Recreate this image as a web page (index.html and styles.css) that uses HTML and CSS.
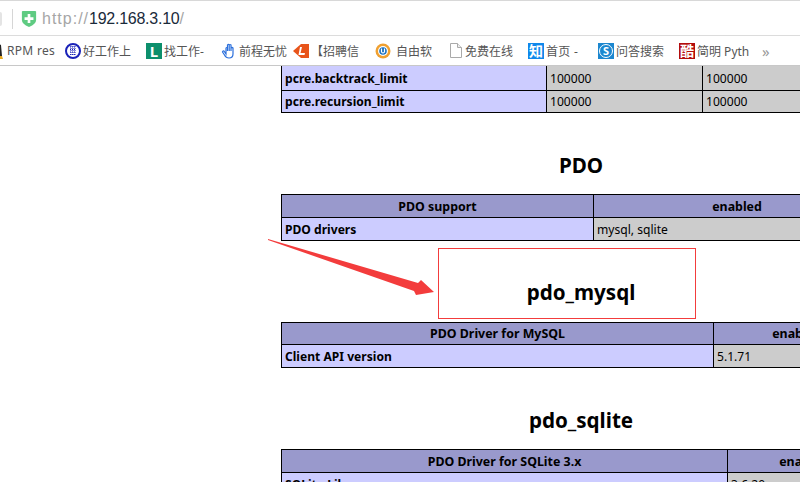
FILE: index.html
```html
<!doctype html>
<html lang="en">
<head>
    <meta charset="UTF-8">
    <title>phpinfo()</title>
    <link rel="stylesheet" href="styles.css">
</head>
<body>
<div class="browser-toolbar">
    <span class="reload-edge"></span>
    <span class="toolbar-sep"></span>
    <svg class="shield" width="16" height="18" viewBox="0 0 18 20">
        <path d="M1 1.500 Q1 1 2 1 H16 Q17 1 17 1.500 V11 Q17 15.500 9 19 Q1 15.500 1 11 Z" fill="#5fcb82"/>
        <path d="M7.500 4.500 H10.500 V8 H14 V11 H10.500 V14.500 H7.500 V11 H4 V8 H7.500 Z" fill="#fff"/>
    </svg>
    <span class="url"><span class="url-dim url-scheme">http://</span>192.168.3.10<span class="url-dim">/</span></span>
</div>

<div class="bookmarks">
    <div class="bookmark bookmark-first">
        <svg class="bm-icon" width="16" height="16" viewBox="0 0 16 16">
            <path d="M4 2 Q8 0 12 2 L13 13 Q8 16 3 13 Z" fill="#222"/>
            <path d="M6 8 Q8 6 10 8 L11 13 H5 Z" fill="#eee"/>
            <path d="M3 13 L7 13 L6 16 H2 Z M9 13 L13 13 L14 16 H10 Z" fill="#e8a820"/>
        </svg>
        <span class="bm-latin">RPM res</span>
    </div>
    <div class="bookmark">
        <svg class="bm-icon" width="16" height="16" viewBox="0 0 16 16">
            <circle cx="8" cy="8" r="7" fill="#fff" stroke="#1a22b8" stroke-width="2"/>
            <path d="M5 4 H11 M5 6.500 H11 M5 9 H11 M5 11.500 H11 M6 3 V13 M8 3 V13 M10 3 V13" stroke="#1a22b8" stroke-width="1" stroke-dasharray="1 1"/>
        </svg>
        <span>好工作上</span>
    </div>
    <div class="bookmark">
        <span class="bm-icon tile tile-green">L</span>
        <span>找工作-</span>
    </div>
    <div class="bookmark">
        <svg class="bm-icon" width="16" height="16" viewBox="0 0 16 16">
            <path d="M3 8 L5 11 V5 Q5.800 4 6.500 5 V2 Q7.300 .800 8.200 2 V2 Q9 1 10 2 V5 Q11 4 12 5 V11 Q12 15 8 15 Q5 15 3.500 12 L1.500 9 Q2 7.500 3 8 Z M6.500 5 V8 M8.200 2 V8 M10 5 V8" fill="#fff" stroke="#2a6fdc" stroke-width="1.200"/>
        </svg>
        <span>前程无忧</span>
    </div>
    <div class="bookmark">
        <svg class="bm-icon" width="16" height="16" viewBox="0 0 16 16">
            <path d="M0 8 L8 1 H16 V15 H8 Z" fill="#e8541a"/>
            <path d="M9 4 L7.500 10 H12 L11.500 12 H5.500 L7 4 Z" fill="#fff"/>
        </svg>
        <span>【招聘信</span>
    </div>
    <div class="bookmark bookmark-wide">
        <svg class="bm-icon" width="16" height="16" viewBox="0 0 16 16">
            <circle cx="8" cy="8" r="7.500" fill="#f0a030"/>
            <circle cx="8" cy="8" r="5" fill="#fff"/>
            <circle cx="8" cy="8" r="3.800" fill="#1a70c0"/>
            <path d="M6.500 5.500 V9 Q8 11 9.500 9 V5.500" fill="none" stroke="#fff" stroke-width="1.200"/>
        </svg>
        <span>自由软</span>
    </div>
    <div class="bookmark">
        <svg class="bm-icon-page" width="12" height="15" viewBox="0 0 12 15">
            <path d="M.500 .500 H7.500 L11.500 4.500 V14.500 H.500 Z" fill="#fff" stroke="#aaa"/>
            <path d="M7.500 .500 V4.500 H11.500" fill="#eee" stroke="#aaa"/>
        </svg>
        <span>免费在线</span>
    </div>
    <div class="bookmark">
        <span class="bm-icon tile tile-blue">知</span>
        <span class="bm-latin">首页 -</span>
    </div>
    <div class="bookmark">
        <span class="bm-icon tile tile-sky"><span class="tile-ring">S</span></span>
        <span>问答搜索</span>
    </div>
    <div class="bookmark">
        <span class="bm-icon tile tile-red">酷</span>
        <span>简明 Pyth</span>
    </div>
    <div class="bookmark-more">»</div>
</div>

<div class="page">
    <div class="content">
        <table class="info-table info-table-top">
            <colgroup><col class="col-a1"><col class="col-a2"><col></colgroup>
            <tr class="row-tall"><td class="key">pcre.backtrack_limit</td><td class="val">100000</td><td class="val">100000</td></tr>
            <tr class="row-short"><td class="key">pcre.recursion_limit</td><td class="val">100000</td><td class="val">100000</td></tr>
        </table>

        <h2 class="mod-title mod-title-pdo">PDO</h2>
        <table class="info-table">
            <colgroup><col class="col-b1"><col></colgroup>
            <tr class="head"><th>PDO support</th><th>enabled</th></tr>
            <tr><td class="key">PDO drivers</td><td class="val">mysql, sqlite</td></tr>
        </table>

        <h2 class="mod-title mod-title-mysql">pdo_mysql</h2>
        <table class="info-table">
            <colgroup><col class="col-c1"><col></colgroup>
            <tr class="head row-short"><th>PDO Driver for MySQL</th><th>enabled</th></tr>
            <tr><td class="key">Client API version</td><td class="val">5.1.71</td></tr>
        </table>

        <h2 class="mod-title mod-title-sqlite">pdo_sqlite</h2>
        <table class="info-table">
            <colgroup><col class="col-d1"><col></colgroup>
            <tr class="head"><th>PDO Driver for SQLite 3.x</th><th>enabled</th></tr>
            <tr><td class="key">SQLite Library</td><td class="val">3.6.20</td></tr>
        </table>
    </div>

    <!-- screenshot annotation -->
    <div class="note-box"></div>
    <svg class="note-arrow" width="170" height="60" viewBox="0 0 170 60">
        <path d="M0 0 L0 1 L146 52 L148 56 L166 53 L153 41 L150 44 Z" fill="#f33c3c"/>
    </svg>
</div>
</body>
</html>
```

FILE: styles.css
```css
* {
    box-sizing: border-box;
}

html, body {
    margin: 0;
    height: 100%;
    overflow: hidden;
    background-color: #fff;
}

body {
    display: flex;
    flex-direction: column;
    font-family: "Noto Sans", "Noto Sans CJK SC", sans-serif;
}

.browser-toolbar {
    height: 36px;
    flex: none;
    display: flex;
    align-items: center;
    border-top: 1px solid #d8d8d8;
    border-bottom: 1px solid #dcdcdc;
    padding-top: 1px;
}

.reload-edge {
    width: 2px;
    height: 14px;
    border-radius: 0 7px 7px 0;
    background-color: #e4e4e4;
}

.toolbar-sep {
    width: 1px;
    height: 20px;
    margin-left: 10px;
    background-color: #d6d6d6;
}

.shield {
    margin-left: 8px;
}

.url {
    margin-left: 5px;
    font-family: "Liberation Sans", Arial, sans-serif;
    font-size: 16px;
    letter-spacing: -.25px;
    color: #1a2a3a;
}

.url-dim {
    color: #a6a6a6;
}

.url-scheme {
    letter-spacing: 1px;
}

.bookmarks {
    height: 30px;
    flex: none;
    display: grid;
    grid-template-columns: 65px 81px 75px 72px 82px 75px 78px 70px 81px 83px 38px;
    align-items: center;
    font-size: 12px;
    color: #555;
    border-bottom: 1px solid #c8c8c8;
    white-space: nowrap;
    overflow: hidden;
}

.bookmark {
    display: flex;
    align-items: center;
    gap: 2px;
}

.bookmark-first {
    margin-left: -11px;
}

.bookmark-wide {
    gap: 5px;
}

.bm-latin {
    letter-spacing: .3px;
}

.bm-icon {
    width: 16px;
    height: 16px;
    flex: none;
}

.bm-icon-page {
    flex: none;
    margin-right: 1px;
}

.tile {
    display: flex;
    align-items: center;
    justify-content: center;
    color: #fff;
    font-weight: 700;
    font-size: 14px;
    line-height: 16px;
}

.tile-green {
    background-color: #0c8f6c;
    font-size: 15px;
}

.tile-blue {
    background-color: #0f88eb;
}

.tile-sky {
    background-color: #1c87cf;
}

.tile-red {
    background-color: #b30d0d;
}

.tile-ring {
    width: 14px;
    height: 14px;
    border: 1px solid #fff;
    border-radius: 50%;
    font-size: 11px;
    line-height: 12px;
    text-align: center;
}

.bookmark-more {
    font-size: 15px;
    color: #999;
}

.page {
    position: relative;
    flex: 1;
    overflow: hidden;
}

.content {
    width: 600px;
    margin-left: 281px;
    font-size: 12.1px;
    color: #000;
}

.info-table {
    width: 600px;
    table-layout: fixed;
    border-collapse: collapse;
}

.info-table-top {
    margin-top: -1px;
}

.info-table td,
.info-table th {
    height: 23px;
    padding: 1px 3px 0;
    border: 1px solid #000;
    line-height: 16px;
    white-space: nowrap;
    overflow: hidden;
}

.info-table th {
    padding-top: 2px;
    font-size: 12.4px;
    text-align: center;
}

.info-table .row-tall td {
    height: 25px;
}

.info-table .row-short td,
.info-table .row-short th {
    height: 22px;
}

.info-table .row-short th {
    padding-top: 1px;
}

.head th {
    background-color: #9999cc;
}

.key {
    background-color: #ccccff;
    font-weight: 700;
}

.val {
    background-color: #cccccc;
}

.col-a1 {
    width: 265px;
}

.col-a2 {
    width: 156px;
}

.col-b1 {
    width: 312px;
}

.col-c1 {
    width: 432px;
}

.col-d1 {
    width: 446px;
}

.mod-title {
    margin: 0;
    text-align: center;
    font-size: 20.6px;
    font-weight: 700;
    line-height: 28px;
}

.mod-title-pdo {
    margin-top: 38px;
    margin-bottom: 15px;
}

.mod-title-mysql {
    margin-top: 37px;
    margin-bottom: 16px;
}

.mod-title-sqlite {
    margin-top: 38px;
    margin-bottom: 15px;
}

.note-box {
    position: absolute;
    left: 438px;
    top: 182px;
    width: 258px;
    height: 71px;
    border: 1px solid #f33c3c;
}

.note-arrow {
    position: absolute;
    left: 268px;
    top: 173px;
}
```
